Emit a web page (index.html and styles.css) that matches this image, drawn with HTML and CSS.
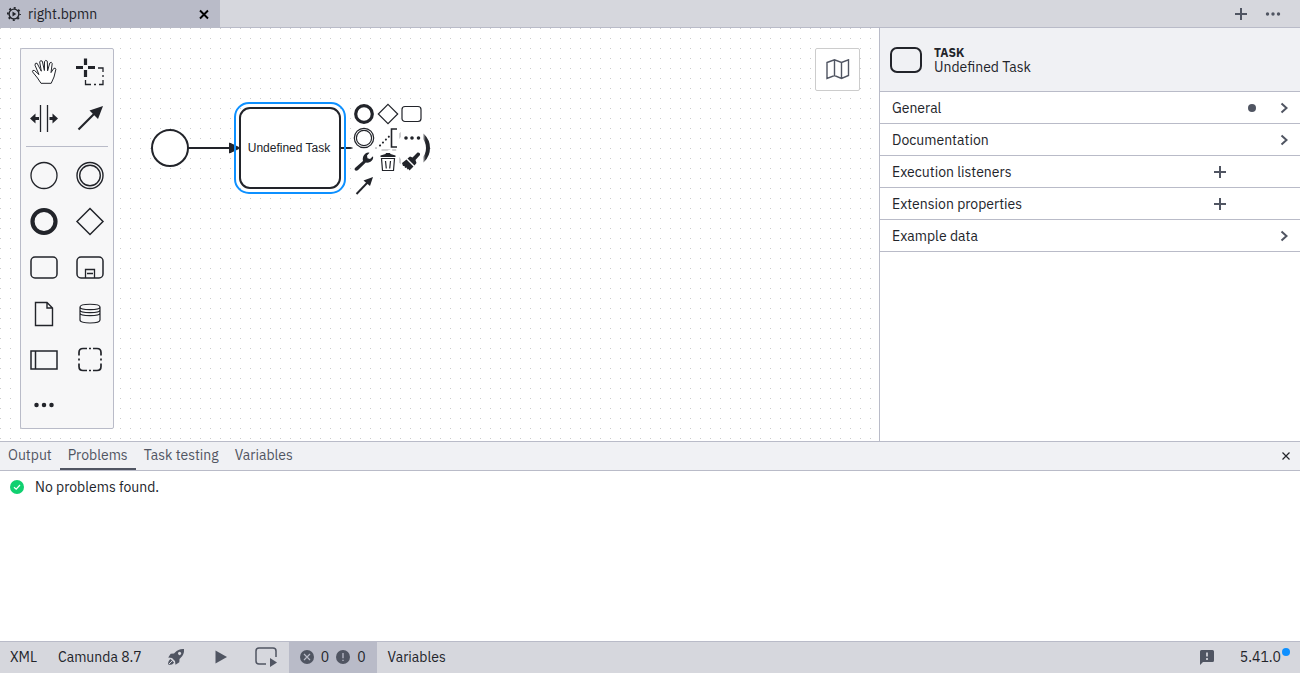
FILE: index.html
```
<!DOCTYPE html>
<html lang="en">
<head>
    <meta charset="UTF-8">
    <meta name="viewport" content="width=device-width, initial-scale=1.0">
    <title>right.bpmn</title>
    <link rel="stylesheet" href="styles.css">
</head>
<body>

    <!-- File tabs -->
    <header class="tabs">
        <div class="tab">
            <svg width="16" height="16" viewBox="0 0 16 16">
                <circle cx="8" cy="8" r="4.9" fill="none" stroke="#22242a" stroke-width="1.4"/>
                <circle cx="8" cy="8" r="6.1" fill="none" stroke="#22242a" stroke-width="1.8" stroke-dasharray="2 2.79" stroke-dashoffset="1"/>
                <path d="M6.500 5.500 10.300 8 6.500 10.500Z" fill="#22242a"/>
            </svg>
            <a href="#" class="tab-name">right.bpmn</a>
            <button class="icon-button" aria-label="Close tab">
                <svg width="16" height="16" viewBox="0 0 16 16"><path d="M4 4.500 12 12.500M12 4.500 4 12.500" stroke="#000" stroke-width="1.9"/></svg>
            </button>
        </div>
        <div class="tab-actions">
            <button class="icon-button" aria-label="New file">
                <svg width="16" height="16" viewBox="0 0 16 16"><path d="M8 2V14M2 8H14" stroke="#505562" stroke-width="2"/></svg>
            </button>
            <button class="icon-button" aria-label="More tabs">
                <svg width="16" height="16" viewBox="0 0 16 16" fill="#505562"><circle cx="2.500" cy="8" r="1.700"/><circle cx="8" cy="8" r="1.700"/><circle cx="13.500" cy="8" r="1.700"/></svg>
            </button>
        </div>
    </header>

    <main class="editor">
        <div class="canvas">
            <!-- Diagram -->
            <svg class="diagram">
                <defs>
                    <pattern id="grid" width="10" height="10" patternUnits="userSpaceOnUse">
                        <rect width="1" height="1" fill="#ccc"/>
                    </pattern>
                </defs>
                <rect width="100%" height="100%" fill="url(#grid)"/>
                <g fill="#fff" stroke="#22242a" stroke-width="2">
                    <circle cx="170" cy="120" r="18"/>
                    <rect x="240" y="80" width="100" height="80" rx="10"/>
                    <path d="M188 120H232M340 120H384"/>
                    <path d="M229.500 115 240 120 229.500 125ZM382 115 392 120 382 125Z" fill="#22242a" stroke-width="1"/>
                    <circle cx="411" cy="120" r="17" stroke-width="4"/>
                </g>
                <rect x="235" y="75" width="110" height="90" rx="14" fill="none" stroke="#0d90ff" stroke-width="2"/>
                <text class="task-label" x="289" y="124" text-anchor="middle">Undefined Task</text>
            </svg>

            <!-- Palette -->
            <div class="palette">
                <button aria-label="Hand tool">
                    <svg viewBox="0 0 46 46"><path d="M20 34.300 16.500 29 11.500 22.800Q11.300 20.700 13.500 21.500L18 25.600 14 16.200Q13.800 13.600 16 14.200L20.300 22.200 18.700 13Q19.300 10.700 21.300 12.200L23.400 21.500 23.500 12.500Q24.700 10.500 26.300 12.200L26.600 21.800 28.800 14Q30.400 12.300 31.200 14.500L30 23.600 32.700 19.500Q34.400 18.400 34.900 20.200L33 28 30.200 34.300Z" fill="#fff" stroke-width="1"/></svg>
                </button>
                <button aria-label="Lasso tool">
                    <svg viewBox="0 0 46 46"><path d="M18.500 9.500V16M18.500 21V28M9 18.500H16M21 18.500H28" stroke-width="3.200"/><path d="M31 19H36V23M36 26V28M36 31V35.500H32M29 35.500H27M24 35.500H18.500V31" stroke-width="1.300"/></svg>
                </button>
                <button aria-label="Space tool">
                    <svg viewBox="0 0 46 46"><path d="M19.500 10V37M26.500 10V37" stroke-width="1.300"/><path d="M13 23.500H18M28.500 23.500H33" stroke-width="3.200"/><path d="M9 23.500 14.500 18.500V28.500ZM37 23.500 31.500 18.500V28.500Z" fill="#22242a" stroke="none"/></svg>
                </button>
                <button aria-label="Connect tool">
                    <svg viewBox="0 0 46 46"><path d="M11.500 34.500 28.500 17.500" stroke-width="2.200"/><path d="M36 11 31 24 22.500 15.500Z" fill="#22242a" stroke="none"/></svg>
                </button>
                <hr>
                <button aria-label="Start event">
                    <svg viewBox="0 0 46 46"><circle cx="23" cy="23.500" r="13" stroke-width="1.300"/></svg>
                </button>
                <button aria-label="Intermediate event">
                    <svg viewBox="0 0 46 46"><circle cx="23" cy="23.500" r="13" stroke-width="1.400"/><circle cx="23" cy="23.500" r="10.300" stroke-width="1.400"/></svg>
                </button>
                <button aria-label="End event">
                    <svg viewBox="0 0 46 46"><circle cx="23" cy="23.500" r="11.500" stroke-width="4.200"/></svg>
                </button>
                <button aria-label="Gateway">
                    <svg viewBox="0 0 46 46"><path d="M23 10.500 36 23.500 23 36.500 10 23.500Z" stroke-width="1.500"/></svg>
                </button>
                <button aria-label="Task">
                    <svg viewBox="0 0 46 46"><rect x="10" y="13" width="26" height="21" rx="4" stroke-width="1.500"/></svg>
                </button>
                <button aria-label="Sub-process">
                    <svg viewBox="0 0 46 46"><rect x="10" y="13" width="26" height="21" rx="4" stroke-width="1.500"/><path d="M18.500 34V25.500H27.500V34M20 29.500H26" stroke-width="1.300"/></svg>
                </button>
                <button aria-label="Data object">
                    <svg viewBox="0 0 46 46"><path d="M14.500 12.500H26L31.500 18V35.500H14.500ZM26 12.500V18H31.500" stroke-width="1.400"/></svg>
                </button>
                <button aria-label="Data store">
                    <svg viewBox="0 0 46 46"><path d="M13 17C13 13.300 33 13.300 33 17V30C33 34 13 34 13 30ZM13 17C13 20.500 33 20.500 33 17M13 20C13 23.500 33 23.500 33 20M13 23C13 26.500 33 26.500 33 23" stroke-width="1.200"/></svg>
                </button>
                <button aria-label="Pool">
                    <svg viewBox="0 0 46 46"><path d="M10 15H36V33H10ZM14.500 15V33" stroke-width="1.500"/></svg>
                </button>
                <button aria-label="Group">
                    <svg viewBox="0 0 46 46"><path d="M12 19.500V16.500Q12 12.500 16 12.500H20M26 12.500H30Q34 12.500 34 16.500V19.500M34 27.500V30.500Q34 34.500 30 34.500H26M20 34.500H16Q12 34.500 12 30.500V27.500M22 12.500H24M22 34.500H24M12 22.500V24.500M34 22.500V24.500" stroke-width="1.700"/></svg>
                </button>
                <button aria-label="More elements">
                    <svg viewBox="0 0 46 46"><path d="M15.500 23H15.510M23 23H23.010M30.500 23H30.510" stroke-width="4.500" stroke-linecap="round"/></svg>
                </button>
            </div>

            <!-- Context pad of the selected task -->
            <div class="context-pad">
                <button aria-label="Append end event">
                    <svg viewBox="0 0 22 22"><circle cx="11" cy="11" r="8.300" stroke-width="3.200"/></svg>
                </button>
                <button aria-label="Append gateway">
                    <svg viewBox="0 0 22 22"><path d="M11 1.300 20.700 11 11 20.700 1.300 11Z" stroke-width="1.200"/></svg>
                </button>
                <button aria-label="Append task">
                    <svg viewBox="0 0 22 22"><rect x="1" y="3.500" width="19" height="15" rx="3" stroke-width="1.200"/></svg>
                </button>
                <button aria-label="Append intermediate event">
                    <svg viewBox="0 0 22 22"><circle cx="11" cy="11" r="9.700" stroke-width="1.200"/><circle cx="11" cy="11" r="7.600" stroke-width="1.200"/></svg>
                </button>
                <button aria-label="Add text annotation">
                    <svg viewBox="0 0 22 22"><path d="M20 2H14.500V20H20" stroke-width="1.600"/><path d="M3 18.500 12 9.500" stroke-width="2" stroke-linecap="round" stroke-dasharray="0.100 4.050"/></svg>
                </button>
                <button aria-label="Append element">
                    <svg viewBox="0 0 22 22"><path d="M5 11H5.010M11 11H11.010M17.500 11H17.510" stroke-width="3.600" stroke-linecap="round"/></svg>
                </button>
                <button aria-label="Change element">
                    <svg viewBox="0 0 22 22"><path d="M2 17 10 10Q9 5 12.500 2.500 14.500 1.200 16.500 1.700L14 4.500 14.500 7.300 17 8 20 5.200Q20.800 8.500 17.500 10.700 15 12 12.800 11.500L4.800 19.300Q2.800 20.300 1.800 19 1.200 18 2 17Z" fill="#22242a" stroke="none"/></svg>
                </button>
                <button aria-label="Delete">
                    <svg viewBox="0 0 22 22"><path d="M4.500 7.500 5.500 19.500H16.500L17.500 7.500ZM8.500 10 9.300 17.500M13.500 10 12.700 17.500" stroke-width="1.200"/><path d="M3.500 6V4.500L8.500 3 9 2H13L13.500 3 18.500 4.500V6Z" fill="#22242a" stroke="none"/></svg>
                </button>
                <button aria-label="Set color">
                    <svg viewBox="0 0 22 22"><path d="M1 12 5.500 8.500 12.500 15.500 8.500 19.500 7.500 18 6.500 18.500 5.500 16.500 4 17 3.500 15 2 15ZM6.500 7.500 9 5.500 11.500 6.500 16.500 1.500Q19.500 1.200 19 4L14.500 9 15.500 12 13.500 14.500Z" fill="#22242a" stroke="none"/></svg>
                </button>
                <button aria-label="Connect">
                    <svg viewBox="0 0 22 22"><path d="M3.500 19 15 7" stroke-width="1.900"/><path d="M20 2 17 11 10.500 5.500Z" fill="#22242a" stroke="none"/></svg>
                </button>
            </div>

            <button class="minimap" aria-label="Open minimap">
                <svg width="26" height="22" viewBox="0 0 26 22"><path d="M2 3.500 9.500 .8 16.500 3.500 23.500 .8V16.500L16.500 19.500 9.500 16.500 2 19.500ZM9.500 .8V16.500M16.500 3.500V19.500" fill="none" stroke="#505562" stroke-width="1.400"/></svg>
            </button>
        </div>

        <!-- Properties panel -->
        <aside class="properties">
            <div class="properties-header">
                <svg width="34" height="28" viewBox="0 0 34 28"><rect x="2" y="2" width="30" height="24" rx="6" fill="none" stroke="#22242a" stroke-width="2"/></svg>
                <div>
                    <div class="element-type">TASK</div>
                    <div class="element-name">Undefined Task</div>
                </div>
            </div>
            <button class="group">
                <span>General</span>
                <i class="filled-dot"></i>
                <svg width="16" height="16" viewBox="0 0 16 16"><path d="M5.500 3.500 10.500 8 5.500 12.500" /></svg>
            </button>
            <button class="group">
                <span>Documentation</span>
                <svg width="16" height="16" viewBox="0 0 16 16"><path d="M5.500 3.500 10.500 8 5.500 12.500" /></svg>
            </button>
            <button class="group group-list">
                <span>Execution listeners</span>
                <svg width="16" height="16" viewBox="0 0 16 16"><path d="M8 2V14M2 8H14"/></svg>
            </button>
            <button class="group group-list">
                <span>Extension properties</span>
                <svg width="16" height="16" viewBox="0 0 16 16"><path d="M8 2V14M2 8H14"/></svg>
            </button>
            <button class="group">
                <span>Example data</span>
                <svg width="16" height="16" viewBox="0 0 16 16"><path d="M5.500 3.500 10.500 8 5.500 12.500" /></svg>
            </button>
        </aside>
    </main>

    <!-- Bottom panel -->
    <section class="panel">
        <nav class="panel-tabs">
            <button>Output</button>
            <button class="active">Problems</button>
            <button>Task testing</button>
            <button>Variables</button>
            <button class="panel-close" aria-label="Close panel">
                <svg width="12" height="12" viewBox="0 0 12 12"><path d="M2.500 3.500 9.500 10.500M9.500 3.500 2.500 10.500" stroke="#22242a" stroke-width="1.200"/></svg>
            </button>
        </nav>
        <div class="panel-body">
            <svg width="14" height="14" viewBox="0 0 14 14"><circle cx="7" cy="7" r="7" fill="#10d070"/><path d="M4 7.200 6.200 9.200 10 5" fill="none" stroke="#fff" stroke-width="1.200"/></svg>
            <span>No problems found.</span>
        </div>
    </section>

    <!-- Status bar -->
    <footer class="status-bar">
        <button class="xml">XML</button>
        <button class="engine">Camunda 8.7</button>
        <button class="status-icon" aria-label="Deploy">
            <svg width="18" height="18" viewBox="0 0 18 18"><path d="M17 1Q17.500 6.500 13.500 10L12.500 11 12.300 14.300 8.500 16.800 8 13 5 10 1.200 9.500 3.700 5.700 7 5.500 8 4.500Q11.500 .5 17 1ZM13.700 4.300A1.600 1.600 0 1 0 13.700 6.600 1.600 1.600 0 0 0 13.700 4.300Z" fill="#505562" fill-rule="evenodd"/><path d="M3.500 11 7 14.500Q6 17 1 17 1 12.500 3.500 11Z" fill="#505562"/><path d="M1.500 16.500 5 13" stroke="#d6d7dd"/></svg>
        </button>
        <button class="status-icon" aria-label="Start instance">
            <svg width="18" height="18" viewBox="0 0 18 18"><path d="M3.500 2.500 15 9 3.500 15.500Z" fill="#505562"/></svg>
        </button>
        <button class="status-icon" aria-label="Test task">
            <svg width="24" height="22" viewBox="0 0 24 22"><path d="M12 18H5Q2 18 2 15V5Q2 2 5 2H19Q22 2 22 5V11" fill="none" stroke="#505562" stroke-width="1.500"/><path d="M16 12 23 16.500 16 21Z" fill="#505562"/></svg>
        </button>
        <button class="problems">
            <svg width="14" height="14" viewBox="0 0 14 14"><circle cx="7" cy="7" r="7" fill="#505562"/><path d="M4 4 10 10M10 4 4 10" stroke="#b9bbc8" stroke-width="1.200"/></svg>
            <span>0</span>
            <svg width="14" height="14" viewBox="0 0 14 14"><circle cx="7" cy="7" r="7" fill="#505562"/><path d="M7 3V8.200M7 9.700V11" stroke="#b9bbc8" stroke-width="1.300"/></svg>
            <span>0</span>
        </button>
        <button class="variables">Variables</button>
        <button class="feedback" aria-label="Feedback">
            <svg width="16" height="16" viewBox="0 0 16 16"><path d="M2.500 1H13.500Q15 1 15 2.500V11.500Q15 13 13.500 13H4L1 16V2.500Q1 1 2.500 1Z" fill="#505562"/><path d="M8 3.500V7.500M8 9V11" stroke="#d6d7dd" stroke-width="1.700"/></svg>
        </button>
        <button class="version">5.41.0<i class="update-dot"></i></button>
    </footer>

</body>
</html>
```
FILE: styles.css
```
* {
    box-sizing: border-box;
}
body {
    margin: 0;
    height: 100vh;
    display: flex;
    flex-direction: column;
    font-family: "IBM Plex Sans", Roboto, sans-serif;
    font-size: 14px;
    line-height: 20px;
    color: #22242a;
    background-color: #fff;
}
button {
    padding: 0;
    border: none;
    background: none;
    font: inherit;
    color: inherit;
    cursor: pointer;
}
svg {
    display: block;
    flex: none;
}

/* File tabs */
.tabs {
    display: flex;
    justify-content: space-between;
    height: 28px;
    background-color: #d6d7dd;
    border-bottom: 1px solid #b9bbc8;
}
.tab {
    display: flex;
    align-items: center;
    gap: 6px;
    width: 220px;
    padding: 0 8px 0 6px;
    background-color: #b9bbc8;
}
.tab-name {
    flex: 1;
    color: inherit;
    text-decoration: none;
}
.tab-actions {
    display: flex;
    align-items: center;
    gap: 16px;
    padding-right: 19px;
}

/* Editor */
.editor {
    flex: 1;
    display: flex;
    min-height: 0;
}
.canvas {
    position: relative;
    flex: 1;
    overflow: hidden;
}
.diagram {
    position: absolute;
    width: 100%;
    height: 100%;
}
.task-label {
    font-family: "Liberation Sans", Arial, sans-serif;
    font-size: 12px;
    fill: #22242a;
}
.palette {
    position: absolute;
    top: 20px;
    left: 20px;
    display: grid;
    grid-template-columns: 46px 46px;
    background-color: #f7f7f8;
    border: 1px solid #b9bbc8;
    border-radius: 2px;
}
.palette svg,
.context-pad svg {
    width: 100%;
    fill: none;
    stroke: #22242a;
}
.palette hr {
    grid-column: 1 / 3;
    width: 82px;
    margin: 5px;
    border: none;
    border-top: 1px solid #b9bbc8;
}
.context-pad {
    position: absolute;
    top: 75px;
    left: 353px;
    display: grid;
    grid-template-columns: 22px 22px 22px;
    gap: 2px;
}
.context-pad button {
    background-color: #fff;
    box-shadow: 0 0 2px 1px #fff;
}
.minimap {
    position: absolute;
    top: 20px;
    right: 19px;
    display: grid;
    place-items: center;
    width: 45px;
    height: 43px;
    background-color: #fff;
    border: 1px solid #ccc;
    border-radius: 2px;
}

/* Properties panel */
.properties {
    width: 421px;
    border-left: 1px solid #b9bbc8;
}
.properties-header {
    display: flex;
    align-items: center;
    gap: 11px;
    height: 64px;
    padding-left: 9px;
    background-color: #f0f1f4;
    border-bottom: 1px solid #b9bbc8;
}
.element-type {
    font-size: 12px;
    font-weight: bold;
    line-height: 14px;
}
.element-name {
    line-height: 14px;
}
.group {
    display: flex;
    align-items: center;
    gap: 16px;
    width: 100%;
    height: 32px;
    padding: 0 8px 0 12px;
    border-bottom: 1px solid #b9bbc8;
    text-align: left;
}
.group span {
    flex: 1;
}
.group svg {
    fill: none;
    stroke: #505562;
    stroke-width: 2;
}
.group-list {
    padding-right: 72px;
}
.filled-dot {
    width: 8px;
    height: 8px;
    margin-right: 4px;
    border-radius: 50%;
    background-color: #505562;
}

/* Bottom panel */
.panel {
    height: 200px;
    border-top: 1px solid #b9bbc8;
}
.panel-tabs {
    display: flex;
    height: 29px;
    background-color: #f0f1f4;
    border-bottom: 1px solid #b9bbc8;
    color: #505562;
}
.panel-tabs button {
    padding: 0 8px;
    border-bottom: 2px solid transparent;
}
.panel-tabs .active {
    border-bottom-color: #505562;
}
.panel-tabs .panel-close {
    margin-left: auto;
}
.panel-body {
    display: flex;
    align-items: center;
    gap: 11px;
    padding: 6px 10px;
}

/* Status bar */
.status-bar {
    display: flex;
    gap: 1px;
    height: 32px;
    background-color: #d6d7dd;
    border-top: 1px solid #b9bbc8;
}
.status-bar button {
    display: flex;
    align-items: center;
    padding: 0 10px 1px;
}
.status-bar .status-icon {
    justify-content: center;
    width: 44px;
    padding: 0 0 1px;
}
.status-bar .engine {
    padding-right: 11px;
}
.status-bar .problems {
    gap: 7px;
    padding: 0 11px 1px;
    background-color: #b9bbc8;
}
.status-bar .feedback {
    margin-left: auto;
}
.status-bar .version {
    position: relative;
    padding: 0 19px 1px 14px;
}
.update-dot {
    position: absolute;
    top: 6px;
    right: 10px;
    width: 8px;
    height: 8px;
    border-radius: 50%;
    background-color: #0d90ff;
}
```
